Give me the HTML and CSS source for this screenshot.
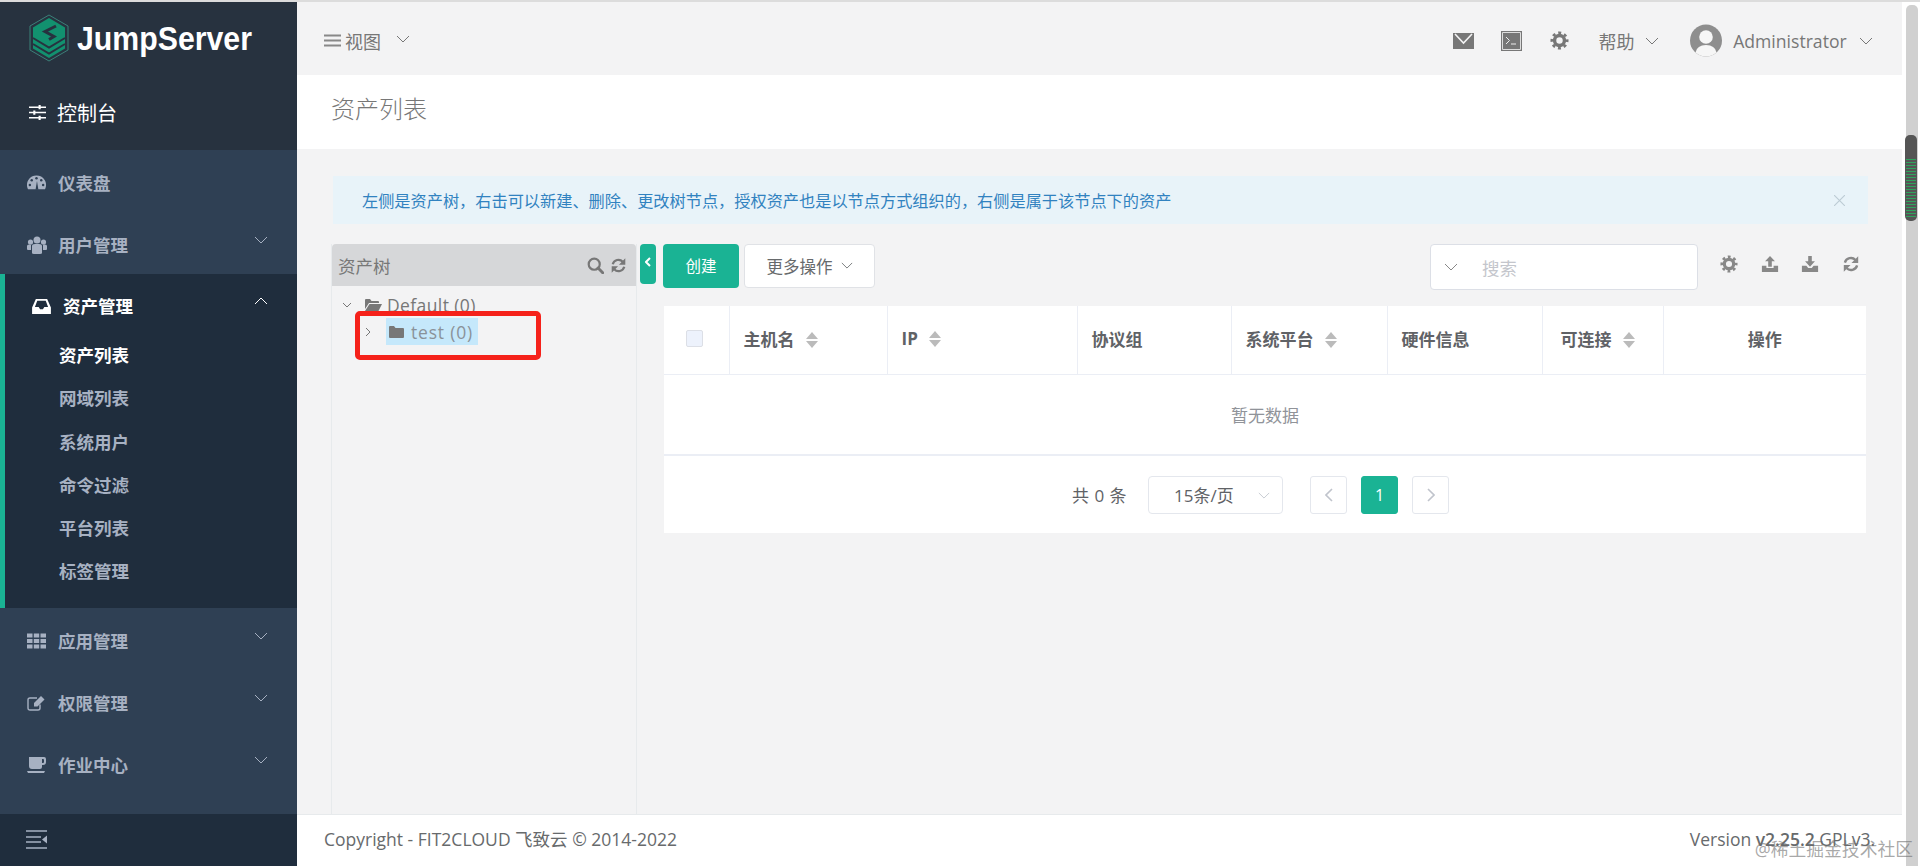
FILE: index.html
```html
<!DOCTYPE html>
<html lang="zh-CN">
<head>
    <meta charset="UTF-8">
    <meta name="viewport" content="width=device-width, initial-scale=1.0">
    <title>资产列表 - JumpServer</title>
    <link rel="stylesheet" href="styles.css">
</head>
<body>
    <svg class="icon-defs" xmlns="http://www.w3.org/2000/svg">
        <symbol id="i-down" viewBox="0 0 14 8"><path d="M1 1l6 6 6-6" fill="none" stroke="currentColor" stroke-width="1"/></symbol>
        <symbol id="i-up" viewBox="0 0 14 8"><path d="M1 7l6-6 6 6" fill="none" stroke="currentColor" stroke-width="1"/></symbol>
        <symbol id="i-cog" viewBox="0 0 20 20"><circle cx="10" cy="10" r="5.2" fill="none" stroke="currentColor" stroke-width="3.6"/><circle cx="10" cy="10" r="8" fill="none" stroke="currentColor" stroke-width="3" stroke-dasharray="3.1 3.18" stroke-dashoffset="1.55"/></symbol>
        <symbol id="i-refresh" viewBox="0 0 20 20"><path d="M3.2 8.5A7 7 0 0 1 15 5.5M16.8 11.500A7 7 0 0 1 5 14.500" fill="none" stroke="currentColor" stroke-width="2.6"/><path d="M18 1.500V9h-7.500zM2 18.500V11h7.500z" fill="currentColor"/></symbol>
        <symbol id="i-search" viewBox="0 0 20 20"><circle cx="8.500" cy="8.500" r="6.500" fill="none" stroke="currentColor" stroke-width="2.600"/><path d="M13 13l5.500 5.500" stroke="currentColor" stroke-width="3.400" stroke-linecap="round"/></symbol>
        <symbol id="i-upload" viewBox="0 0 20 18"><path d="M10 0l5.500 6H12v6H8V6H4.500zM1 11h5v2.500h8V11h5v7H1z" fill="currentColor"/></symbol>
        <symbol id="i-download" viewBox="0 0 20 18"><path d="M8 0h4v6h3.500L10 12 4.500 6H8zM1 11h5l2 2.500h4l2-2.500h5v7H1z" fill="currentColor"/></symbol>
    </svg>

    <div class="app">
        <aside class="sidebar">
            <div class="logo">
                <svg class="logo-mark" viewBox="0 0 40 48">
                    <path d="M20 1l19 11v24L20 47 1 36V12z" fill="none" stroke="#3b8079" stroke-width="1"/>
                    <path d="M20 4l16 9.500v21L20 44 4 34.500v-21z" fill="#12916f"/>
                    <path d="M4 24l16 9.500L36 24M4 30l16 9.500L36 30" fill="none" stroke="#27323f" stroke-width="2"/>
                    <path d="M27 12l-11 5.500 9 5-5 3" fill="none" stroke="#27323f" stroke-width="3"/>
                </svg>
                <span class="logo-text">JumpServer</span>
            </div>
            <div class="console">
                <svg class="console-icon" viewBox="0 0 16 14">
                    <path d="M0 2h16M0 7h16M0 12h16" stroke="currentColor" stroke-width="1.500"/>
                    <path d="M9 0h2v4H9zM4 5h2v4H4zM9 10h2v4H9z" fill="currentColor"/>
                </svg>
                <span>控制台</span>
            </div>

            <nav class="nav">
                <a class="nav-item">
                    <svg class="nav-icon" viewBox="0 0 20 16">
                        <path d="M10 0a10 10 0 0 1 9 14.500H1A10 10 0 0 1 10 0z" fill="currentColor"/>
                        <circle cx="10" cy="3" r="1.300" fill="#2f4054"/><circle cx="5" cy="5" r="1.300" fill="#2f4054"/><circle cx="3" cy="10" r="1.300" fill="#2f4054"/><circle cx="15" cy="5" r="1.300" fill="#2f4054"/><circle cx="17" cy="10" r="1.300" fill="#2f4054"/>
                        <path d="M9 15l1.500-9 1.500 9z" fill="#2f4054"/>
                    </svg>
                    <span>仪表盘</span>
                </a>
                <a class="nav-item">
                    <svg class="nav-icon nav-icon-users" viewBox="0 0 20 18">
                        <circle cx="10" cy="4" r="3.500" fill="currentColor"/><circle cx="3.500" cy="6" r="2.600" fill="currentColor"/><circle cx="16.500" cy="6" r="2.600" fill="currentColor"/>
                        <path d="M5 10q0-2 3-2h4q3 0 3 2v7q0 1-2 1H7q-2 0-2-1zM0 10q0-1.500 2-1.500h2V14H1q-1 0-1-1zM20 10q0-1.500-2-1.500h-2V14h3q1 0 1-1z" fill="currentColor"/>
                    </svg>
                    <span>用户管理</span>
                    <svg class="nav-arrow"><use href="#i-down"/></svg>
                </a>

                <div class="nav-group">
                    <a class="nav-item nav-head">
                        <svg class="nav-icon nav-icon-inbox" viewBox="0 0 20 17">
                            <path fill-rule="evenodd" d="M4 1h12l4 9v7H0v-7zM5.500 3L3 9.500h4l1.500 2.500h3L13 9.500h4L14.500 3z" fill="currentColor"/>
                        </svg>
                        <span>资产管理</span>
                        <svg class="nav-arrow"><use href="#i-up"/></svg>
                    </a>
                    <ul class="sub-list">
                        <li class="sub-item current">资产列表</li>
                        <li class="sub-item">网域列表</li>
                        <li class="sub-item">系统用户</li>
                        <li class="sub-item">命令过滤</li>
                        <li class="sub-item">平台列表</li>
                        <li class="sub-item">标签管理</li>
                    </ul>
                </div>

                <a class="nav-item">
                    <svg class="nav-icon" viewBox="0 0 19 15">
                        <path d="M0 0h5.500v4H0zM6.800 0h5.400v4H6.800zM13.500 0H19v4h-5.500zM0 5.500h5.500v4H0zM6.800 5.500h5.400v4H6.800zM13.500 5.500H19v4h-5.500zM0 11h5.500v4H0zM6.800 11h5.400v4H6.800zM13.500 11H19v4h-5.500z" fill="currentColor"/>
                    </svg>
                    <span>应用管理</span>
                    <svg class="nav-arrow"><use href="#i-down"/></svg>
                </a>
                <a class="nav-item">
                    <svg class="nav-icon" viewBox="0 0 19 16">
                        <path d="M13 9.500V13q0 2-2 2H3q-2 0-2-2V5q0-2 2-2h7" fill="none" stroke="currentColor" stroke-width="1.400"/>
                        <path d="M7 8l7-7 3.500 3.500-7 7H7z" fill="currentColor"/>
                    </svg>
                    <span>权限管理</span>
                    <svg class="nav-arrow"><use href="#i-down"/></svg>
                </a>
                <a class="nav-item">
                    <svg class="nav-icon" viewBox="0 0 19 16">
                        <path d="M2 0h15a2 2 0 0 1 2 2v3a3 3 0 0 1-3 3h-1v2a2 2 0 0 1-2 2H5a3 3 0 0 1-3-3zM15 2v4h1a1 1 0 0 0 1-1V3a1 1 0 0 0-1-1zM0 14h18l-1 2H1z" fill="currentColor" fill-rule="evenodd"/>
                    </svg>
                    <span>作业中心</span>
                    <svg class="nav-arrow"><use href="#i-down"/></svg>
                </a>
            </nav>

            <div class="collapse-bar">
                <svg class="collapse-icon" viewBox="0 0 21 19">
                    <path d="M0 1h21M0 7h15M0 12h15M0 18h21" stroke="currentColor" stroke-width="1.500"/>
                    <path d="M21 5.500v8l-5-4z" fill="currentColor"/>
                </svg>
            </div>
        </aside>

        <div class="main">
            <header class="topbar">
                <div class="view-menu">
                    <svg class="bars-icon" viewBox="0 0 17 13"><path d="M0 1.500h17M0 6.500h17M0 11.500h17" stroke="currentColor" stroke-width="2.200"/></svg>
                    <span>视图</span>
                    <svg class="view-arrow"><use href="#i-down"/></svg>
                </div>
                <div class="top-actions">
                    <svg class="top-mail" viewBox="0 0 21 16">
                        <path d="M0 0h21v16H0z" fill="#777"/>
                        <path d="M2 1l8.500 9L19 1" fill="none" stroke="#f3f3f4" stroke-width="1.600"/>
                    </svg>
                    <svg class="top-term" viewBox="0 0 21 20">
                        <path d="M0 0h21v20H0z" fill="#777"/>
                        <path d="M1.500 1.500h18v17h-18z" fill="none" stroke="#ddd" stroke-width="1"/>
                        <path d="M5 6l3.500 3.500L5 13M10 13h5" fill="none" stroke="#eee" stroke-width="1"/>
                    </svg>
                    <svg class="top-cog"><use href="#i-cog"/></svg>
                    <div class="top-help">
                        <span>帮助</span>
                        <svg class="top-arrow"><use href="#i-down"/></svg>
                    </div>
                    <svg class="avatar" viewBox="0 0 32 33">
                        <circle cx="16" cy="16.500" r="16" fill="#8e8e8e"/>
                        <circle cx="16" cy="13" r="6.800" fill="#f6f6f6"/>
                        <path d="M5.500 28.500Q7 21 16 21t10.500 7.500a16 16 0 0 1-21 0z" fill="#f6f6f6"/>
                    </svg>
                    <span class="top-user">Administrator</span>
                    <svg class="top-arrow top-arrow-user"><use href="#i-down"/></svg>
                </div>
            </header>

            <div class="page-heading">
                <h2>资产列表</h2>
            </div>

            <section class="content">
                <div class="alert">
                    <span>左侧是资产树，右击可以新建、删除、更改树节点，授权资产也是以节点方式组织的，右侧是属于该节点下的资产</span>
                    <svg class="alert-close" viewBox="0 0 10 10"><path d="M0 0l10 10M10 0L0 10" stroke="currentColor" stroke-width="1"/></svg>
                </div>

                <div class="split">
                    <div class="tree-panel">
                        <div class="tree-head">
                            <span>资产树</span>
                            <svg class="tree-tool"><use href="#i-search"/></svg>
                            <svg class="tree-tool"><use href="#i-refresh"/></svg>
                        </div>
                        <div class="tree-row">
                            <svg class="tree-arrow" viewBox="0 0 10 6"><path d="M1 1l4 4 4-4" fill="none" stroke="currentColor" stroke-width="1"/></svg>
                            <svg class="tree-folder" viewBox="0 0 17 14">
                                <path d="M0 2q0-1 1-1h4l1.500 2H13q1 0 1 1v1H4L0 11z" fill="currentColor"/>
                                <path d="M4.500 6H17l-3.500 7H0z" fill="currentColor"/>
                            </svg>
                            <span>Default (0)</span>
                        </div>
                        <div class="tree-row tree-row-child">
                            <svg class="tree-arrow tree-arrow-right" viewBox="0 0 6 10"><path d="M1 1l4 4-4 4" fill="none" stroke="currentColor" stroke-width="1"/></svg>
                            <div class="tree-selected">
                                <svg class="tree-folder tree-folder-closed" viewBox="0 0 15 12">
                                    <path d="M0 1q0-1 1-1h4l1.500 2H14q1 0 1 1v8q0 1-1 1H1q-1 0-1-1z" fill="currentColor"/>
                                </svg>
                                <span>test (0)</span>
                            </div>
                        </div>
                        <div class="red-mark"></div>
                    </div>

                    <button class="tree-toggle">
                        <svg viewBox="0 0 6 10"><path d="M5 1L1 5l4 4" fill="none" stroke="currentColor" stroke-width="2"/></svg>
                    </button>

                    <div class="list-panel">
                        <div class="toolbar">
                            <button class="btn-create">创建</button>
                            <button class="btn-more">更多操作<svg class="more-arrow"><use href="#i-down"/></svg></button>
                            <div class="search-box">
                                <svg class="search-arrow"><use href="#i-down"/></svg>
                                <span>搜索</span>
                            </div>
                            <div class="table-tools">
                                <svg class="tool-icon"><use href="#i-cog"/></svg>
                                <svg class="tool-icon"><use href="#i-upload"/></svg>
                                <svg class="tool-icon"><use href="#i-download"/></svg>
                                <svg class="tool-icon"><use href="#i-refresh"/></svg>
                            </div>
                        </div>

                        <div class="table-card">
                            <table class="asset-table">
                                <thead>
                                    <tr>
                                        <th class="col-check"><span class="checkbox"></span></th>
                                        <th class="col-name">主机名<span class="sort"></span></th>
                                        <th class="col-ip">IP<span class="sort"></span></th>
                                        <th class="col-proto">协议组</th>
                                        <th class="col-platform">系统平台<span class="sort"></span></th>
                                        <th class="col-hw">硬件信息</th>
                                        <th class="col-conn">可连接<span class="sort"></span></th>
                                        <th class="col-action">操作</th>
                                    </tr>
                                </thead>
                                <tbody>
                                    <tr>
                                        <td class="empty-cell" colspan="8">暂无数据</td>
                                    </tr>
                                </tbody>
                            </table>
                            <div class="pagination">
                                <span class="total">共 0 条</span>
                                <div class="page-size">
                                    <span>15条/页</span>
                                    <svg class="page-size-arrow"><use href="#i-down"/></svg>
                                </div>
                                <button class="page-btn page-prev"><svg viewBox="0 0 8 14"><path d="M7 1L1 7l6 6" fill="none" stroke="currentColor" stroke-width="1.600"/></svg></button>
                                <button class="page-btn page-current">1</button>
                                <button class="page-btn"><svg viewBox="0 0 8 14"><path d="M1 1l6 6-6 6" fill="none" stroke="currentColor" stroke-width="1.600"/></svg></button>
                            </div>
                        </div>
                    </div>
                </div>
            </section>

            <footer class="footer">
                <span>Copyright - FIT2CLOUD 飞致云 © 2014-2022</span>
                <span>Version <b>v2.25.2</b> GPLv3.</span>
            </footer>
        </div>

        <div class="scroll-gutter">
            <div class="scroll-track">
                <div class="scroll-thumb"></div>
            </div>
        </div>
    </div>

    <div class="watermark">@稀土掘金技术社区</div>
</body>
</html>
```

FILE: styles.css
```css
:root {
    --green: #1ab394;
    --nav-bg: #2f4054;
    --nav-dark: #1f2d3d;
    --nav-text: #a7b1c2;
    --page-bg: #f3f3f4;
    --text: #676a6c;
    --line: #e7eaec;
}

* {
    box-sizing: border-box;
}

html, body {
    height: 100%;
}

body {
    margin: 0;
    overflow: hidden;
    font-family: "Open Sans", "Noto Sans CJK SC", sans-serif;
    color: var(--text);
    background: #fff;
}

svg {
    display: block;
    flex: none;
}

button {
    font: inherit;
    cursor: pointer;
}

.icon-defs {
    display: none;
}

.app {
    display: flex;
    height: 866px;
    border-top: 2px solid #dcdcdc;
}

/* sidebar */
.sidebar {
    width: 297px;
    flex: none;
    display: flex;
    flex-direction: column;
    background: var(--nav-bg);
}

.logo {
    height: 73px;
    padding: 12px 0 0 29px;
    display: flex;
    align-items: flex-start;
    gap: 8px;
    background: #27323f;
}

.logo-mark {
    width: 40px;
    height: 48px;
}

/* the logo type is narrower than any installed bold face */
.logo-text {
    font-family: "Liberation Sans", sans-serif;
    font-size: 34px;
    line-height: 48px;
    font-weight: 700;
    color: #fff;
    transform: scaleX(0.89);
    transform-origin: left center;
}

.console {
    height: 75px;
    padding-left: 29px;
    display: flex;
    align-items: center;
    gap: 11px;
    font-size: 20px;
    color: #fff;
    background: #27323f;
}

.console-icon {
    width: 17px;
    height: 15px;
}

.nav {
    flex: 1;
}

.nav-item {
    height: 62px;
    padding: 3px 29px 0 27px;
    display: flex;
    align-items: center;
    font-size: 17.500px;
    font-weight: 700;
    color: var(--nav-text);
}

.nav-icon {
    width: 19px;
    height: 16px;
    margin-right: 12px;
}

.nav-icon-users {
    width: 20px;
    height: 18px;
    margin-right: 11px;
}

.nav-arrow {
    width: 14px;
    height: 8px;
    margin: -10px 0 0 auto;
}

.nav-group {
    height: 334px;
    border-left: 5px solid var(--green);
    background: var(--nav-dark);
}

.nav-head {
    height: 60px;
    padding-left: 27px;
    color: #fff;
}

.nav-icon-inbox {
    margin-right: 12px;
}

.sub-list {
    margin: 0;
    padding: 0;
    list-style: none;
}

.sub-item {
    height: 43.300px;
    line-height: 43.300px;
    padding-left: 54px;
    font-size: 17.500px;
    font-weight: 700;
    color: var(--nav-text);
}

.sub-item.current {
    color: #fff;
}

.collapse-bar {
    height: 52px;
    padding: 16px 0 0 26px;
    color: var(--nav-text);
    background: var(--nav-dark);
}

.collapse-icon {
    width: 21px;
    height: 19px;
}

/* top bar */
.main {
    flex: 1;
    min-width: 0;
    display: flex;
    flex-direction: column;
    background: var(--page-bg);
}

.topbar {
    height: 73px;
    padding: 4px 29px 0 27px;
    display: flex;
    align-items: center;
    justify-content: space-between;
    font-size: 18px;
    color: #777;
}

.view-menu {
    display: flex;
    align-items: center;
}

.bars-icon {
    width: 17px;
    height: 13px;
    color: #888;
    margin-right: 4px;
}

.view-arrow {
    width: 14px;
    height: 8px;
    margin: -3px 0 0 15px;
}

.top-actions {
    display: flex;
    align-items: center;
}

.top-mail {
    width: 21px;
    height: 16px;
    margin-right: 27px;
}

.top-term {
    width: 21px;
    height: 20px;
    margin-right: 28px;
}

.top-cog {
    width: 19px;
    height: 19px;
    margin-right: 30px;
    color: #777;
}

.top-help {
    display: flex;
    align-items: center;
    gap: 10px;
    margin-right: 31.600px;
}

.top-arrow {
    width: 14px;
    height: 8px;
}

.avatar {
    width: 32px;
    height: 33px;
    margin-right: 11px;
}

.top-user {
    font-size: 17.600px;
}

.top-arrow-user {
    margin-left: 12.300px;
}

/* heading */
.page-heading {
    height: 74px;
    padding: 0 0 9px 34px;
    display: flex;
    align-items: center;
    background: #fff;
}

.page-heading h2 {
    margin: 0;
    font-size: 24px;
    font-weight: 300;
    color: #777;
}

/* content */
.content {
    flex: 1;
    min-height: 0;
    padding: 27px 36px 0 34px;
    display: flex;
    flex-direction: column;
}

.alert {
    height: 48px;
    margin: 0 -2px 0 2px;
    padding: 0 23px 0 29px;
    display: flex;
    align-items: center;
    justify-content: space-between;
    font-size: 16.200px;
    color: #3182c0;
    background: #e8f3f9;
}

.alert-close {
    width: 11px;
    height: 11px;
    color: #bccbd4;
}

.split {
    flex: 1;
    min-height: 0;
    margin-top: 20px;
    display: flex;
}

/* tree */
.tree-panel {
    position: relative;
    width: 306px;
    flex: none;
    border-left: 1px solid var(--line);
    border-right: 1px solid var(--line);
}

.tree-head {
    height: 42px;
    padding: 0 9px 0 6px;
    display: flex;
    align-items: center;
    gap: 6px;
    font-size: 17.500px;
    color: #777;
    background: #d6d7d9;
    border-radius: 4px 4px 0 0;
}

.tree-head span {
    margin-right: auto;
}

.tree-tool {
    width: 17px;
    height: 17px;
    color: #777;
}

.tree-row {
    height: 27px;
    padding-left: 10px;
    margin-top: 5px;
    display: flex;
    align-items: center;
    font-size: 17.500px;
    letter-spacing: 0.4px;
    color: #777;
}

.tree-row-child {
    margin-top: 0;
    padding-left: 33px;
    letter-spacing: 0.8px;
}

.tree-arrow {
    width: 10px;
    height: 6px;
    margin-right: 13px;
}

.tree-arrow-right {
    width: 6px;
    height: 10px;
    margin-right: 15px;
}

.tree-folder {
    width: 17px;
    height: 14px;
    margin-right: 5px;
    color: #777;
}

.tree-selected {
    height: 27px;
    padding: 0 5px 0 3px;
    display: flex;
    align-items: center;
    color: #8a9299;
    background: #c5e8fb;
}

.tree-folder-closed {
    width: 15px;
    height: 12px;
    margin-right: 7px;
}

.red-mark {
    position: absolute;
    left: 23px;
    top: 67px;
    width: 186px;
    height: 49px;
    border: 5px solid #f5211a;
    border-radius: 5px;
}

.tree-toggle {
    width: 16px;
    height: 40px;
    margin-left: 3px;
    padding: 0 0 4px 0;
    display: flex;
    align-items: center;
    justify-content: center;
    border: 0;
    border-radius: 4px;
    color: #fff;
    background: var(--green);
}

.tree-toggle svg {
    width: 6px;
    height: 10px;
}

/* list */
.list-panel {
    flex: 1;
    min-width: 0;
    margin-left: 7px;
}

.toolbar {
    height: 62px;
    display: flex;
    align-items: flex-start;
}

.btn-create {
    width: 76px;
    height: 44px;
    padding-bottom: 3px;
    border: 0;
    border-radius: 4px;
    font-size: 15.500px;
    color: #fff;
    background: var(--green);
}

.btn-more {
    width: 131px;
    height: 44px;
    margin-left: 5px;
    padding-bottom: 2px;
    display: flex;
    align-items: center;
    justify-content: center;
    gap: 8px;
    border: 1px solid #e0e2e6;
    border-radius: 4px;
    font-size: 16.500px;
    color: #676a6c;
    background: #fff;
}

.more-arrow {
    width: 12px;
    height: 7px;
}

.search-box {
    width: 268px;
    height: 46px;
    margin-left: auto;
    padding-left: 13px;
    display: flex;
    align-items: center;
    gap: 24px;
    border: 1px solid #dcdfe6;
    border-radius: 4px;
    font-size: 17.500px;
    color: #c4c6cc;
    background: #fff;
}

.search-arrow {
    width: 14px;
    height: 8px;
    color: #888;
}

.table-tools {
    width: 168px;
    height: 40px;
    padding: 0 6px 0 22px;
    display: flex;
    align-items: center;
    justify-content: space-between;
    color: #888;
}

.tool-icon {
    width: 18px;
    height: 18px;
}

.table-card {
    width: 1202px;
    margin-left: 1px;
    background: #fff;
}

.asset-table {
    width: 100%;
    table-layout: fixed;
    border-collapse: collapse;
}

.asset-table th {
    height: 68px;
    padding: 0 0 2px 14px;
    text-align: left;
    font-size: 17px;
    font-weight: 700;
    color: #606266;
    border-right: 1px solid #ebeef5;
    border-bottom: 1px solid #ebeef5;
}

.asset-table th:last-child {
    border-right: 0;
}

.col-check { width: 65px; }
.col-name { width: 158px; }
.col-ip { width: 190px; }
.col-proto { width: 154px; }
.col-platform { width: 156px; }
.col-hw { width: 155px; }
.col-conn { width: 121px; }
.col-action { width: 203px; }

.asset-table .col-action {
    padding-left: 0;
    text-align: center;
}

.asset-table .col-conn {
    padding-left: 18px;
}

.asset-table .col-check {
    padding-left: 22px;
}

.checkbox {
    display: block;
    width: 17px;
    height: 17px;
    border: 1px solid #dcdfe6;
    border-radius: 2px;
    background: #edf2fc;
}

.sort {
    display: inline-block;
    width: 13px;
    height: 16px;
    margin-left: 11px;
    vertical-align: -2px;
}

.sort::before,
.sort::after {
    content: "";
    display: block;
    width: 0;
    border-left: 6.500px solid transparent;
    border-right: 6.500px solid transparent;
}

.sort::before {
    margin-bottom: 2px;
    border-bottom: 7px solid #bbb;
}

.sort::after {
    border-top: 7px solid #bbb;
}

.empty-cell {
    height: 81px;
    text-align: center;
    font-size: 17px;
    color: #909399;
    border-bottom: 2px solid #ebeef5;
}

.pagination {
    height: 77px;
    padding-right: 9px;
    display: flex;
    align-items: center;
    justify-content: center;
    font-size: 17px;
    color: #606266;
}

.total {
    margin-right: 21px;
    letter-spacing: 0.5px;
}

.page-size {
    position: relative;
    width: 135px;
    height: 38px;
    margin-right: 27px;
    padding-left: 25px;
    display: flex;
    align-items: center;
    border: 1px solid #e4e7ed;
    border-radius: 4px;
}

.page-size-arrow {
    position: absolute;
    right: 12px;
    top: 15px;
    width: 12px;
    height: 7px;
    color: #c0c4cc;
}

.page-btn {
    width: 37px;
    height: 38px;
    margin-right: 14px;
    padding: 0;
    display: flex;
    align-items: center;
    justify-content: center;
    border: 1px solid #e4e7ed;
    border-radius: 3px;
    color: #c0c4cc;
    background: #fff;
}

.page-btn:last-child {
    margin-right: 0;
}

.page-btn svg {
    width: 8px;
    height: 14px;
}

.page-current {
    border-color: var(--green);
    font-size: 16px;
    color: #fff;
    background: var(--green);
}

/* footer */
.footer {
    height: 52px;
    flex: none;
    padding: 0 27px 4px;
    display: flex;
    align-items: center;
    justify-content: space-between;
    font-size: 17.500px;
    color: #676a6c;
    background: #fff;
    border-top: 1px solid var(--line);
}

.footer b {
    font-weight: 600;
}

/* the browser scrollbar, as it shows in the picture */
.scroll-gutter {
    width: 18px;
    flex: none;
    padding: 3px 2px 0 4px;
    background: #fff;
}

.scroll-track {
    height: 100%;
    padding-top: 130px;
    border-radius: 5px 5px 0 0;
    background: #d0d0d0;
}

.scroll-thumb {
    width: 12px;
    height: 86px;
    margin-left: -1px;
    border-radius: 5px;
    background:
        repeating-linear-gradient(#2fa35d 0 1px, #555 1px 3px) 1px 24px / 10px 58px no-repeat,
        #555;
}

.watermark {
    position: absolute;
    right: 7px;
    bottom: 4px;
    font-size: 17.800px;
    line-height: 26px;
    color: rgba(110, 110, 110, 0.6);
}
```
